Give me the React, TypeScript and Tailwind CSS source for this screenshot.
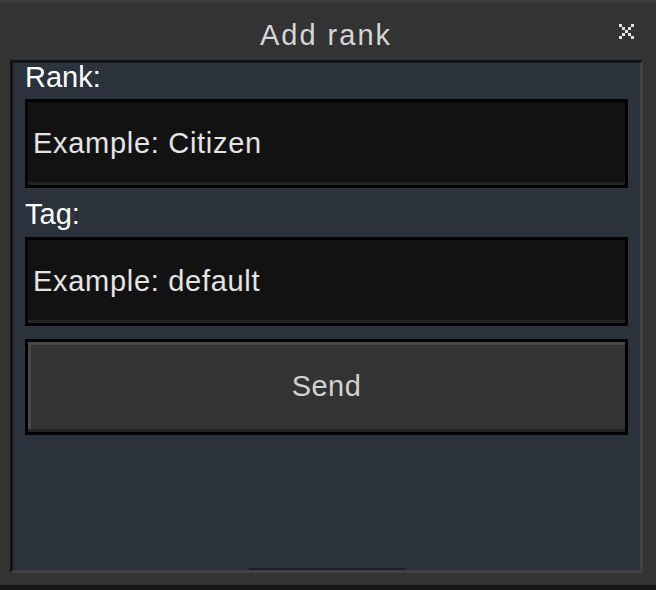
import React from 'react'

const font = { fontFamily: '"Liberation Sans", Arial, sans-serif' }

function CloseIcon() {
  // 5x5 pixel cross, 3px per pixel
  const cells = [
    [0, 0], [4, 0],
    [1, 1], [3, 1],
    [2, 2],
    [1, 3], [3, 3],
    [0, 4], [4, 4],
  ]
  return (
    <svg width="15" height="15" viewBox="0 0 15 15" shapeRendering="crispEdges">
      {cells.map(([x, y]) => (
        <rect key={`${x}-${y}`} x={x * 3} y={y * 3} width="3" height="3" fill="#e2e2e2" />
      ))}
    </svg>
  )
}

function Field({ placeholder }: { placeholder: string }) {
  return (
    <div className="h-[89px] border-[3px] border-black bg-[#121212] flex flex-col">
      <input
        type="text"
        placeholder={placeholder}
        className="flex-1 w-full bg-transparent outline-none pl-[5px] pt-[3px] text-[29px] tracking-[0.7px] text-[#e4e4e4] placeholder:text-[#e4e4e4]"
        style={font}
      />
      <div className="h-[3px] bg-[#242424]" />
    </div>
  )
}

export default function App() {
  return (
    <div
      className="w-[656px] h-[590px] bg-[#333333] flex flex-col border-t-[3px] border-t-[#3c3c3c] border-b-[5px] border-b-[#161616]"
      style={font}
    >
      {/* Header */}
      <div className="h-[57px] grid grid-cols-[1fr_auto_1fr] items-start">
        <div />
        <h1 className="pt-4 text-[29px] leading-[32px] text-[#d6d6d6] tracking-[2px] pr-[4px]">Add rank</h1>
        <div className="flex justify-end pr-[22px] pt-[21px]">
          <button className="block">
            <CloseIcon />
          </button>
        </div>
      </div>

      {/* Panel */}
      <div className="ml-[10px] mr-[13px] h-[513px] flex flex-col bg-[#2b323b] border-[3px] border-l-[#131313] border-t-[#131313] border-r-[#424242] border-b-[#424242] px-3">
        <label className="text-[29px] leading-[28px] text-white">Rank:</label>
        <div className="mt-2">
          <Field placeholder="Example: Citizen" />
        </div>

        <label className="mt-3 text-[29px] leading-[28px] text-white">Tag:</label>
        <div className="mt-[9px]">
          <Field placeholder="Example: default" />
        </div>

        <button className="mt-[13px] h-[96px] border-[3px] border-black bg-[#333333] flex flex-col">
          <div className="flex-1 flex border-t-[3px] border-t-[#474747] border-l-[3px] border-l-[#474747]">
            <span className="flex-1 flex items-center justify-center text-[29px] tracking-[0.5px] text-[#d2d2d2] pr-[3px]">
              Send
            </span>
          </div>
          <div className="h-[3px] bg-[#222222] w-full" />
        </button>

        <div className="mt-auto self-center w-[156px] h-[2px] bg-[#1a1e24]" />
      </div>
    </div>
  )
}
